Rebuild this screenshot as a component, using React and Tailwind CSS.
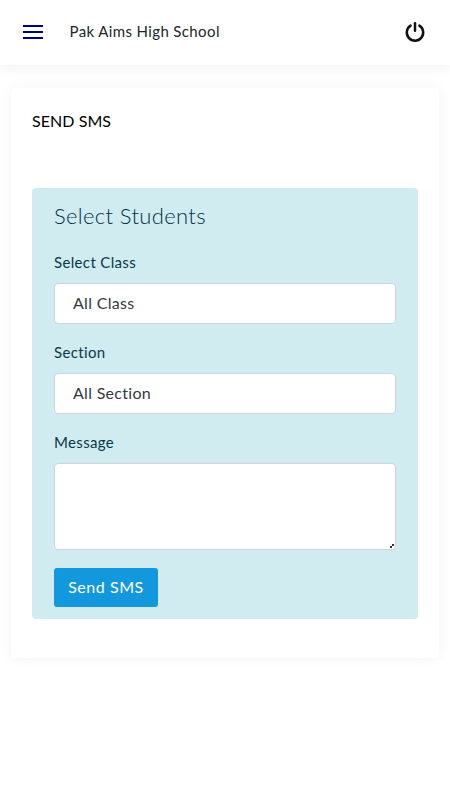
import React from "react";

const Field = ({ label, value, className }) => (
  <div className={className}>
    <label className="block text-[15px] leading-[22px] tracking-[0.35px] text-[#07384a]">{label}</label>
    <input
      readOnly
      value={value}
      className="mt-[10px] block h-[41px] w-full rounded-[4px] border border-[#ced4da] bg-white px-[18px] pb-[2px] text-[16px] tracking-[0.3px] text-[#33393f] outline-none"
    />
  </div>
);

export default function App() {
  return (
    <div className="min-h-[800px] bg-white font-['Lato','Noto_Sans',sans-serif]">
      <header className="flex h-[65px] items-center bg-white pb-[2px] pl-[23px] pr-[25px] shadow-[0_4px_12px_rgba(0,0,0,0.05)]">
        <div className="flex w-[20px] flex-col gap-[4px]">
          <span className="h-[2px] bg-[#000080]" />
          <span className="h-[2px] bg-[#000080]" />
          <span className="h-[2px] bg-[#000080]" />
        </div>
        <h1 className="ml-[26.5px] flex-1 text-[15px] tracking-[0.38px] text-[#212529]">Pak Aims High School</h1>
        <svg width="20" height="20" viewBox="0 0 20 20" fill="none" stroke="#111" strokeWidth="2.5" strokeLinecap="round">
          <path d="M5.6 3.6a8.2 8.2 0 1 0 8.8 0" />
          <path d="M10 1.2v7.6" />
        </svg>
      </header>
      <main className="px-[11px] pt-[23px]">
        <section className="h-[570px] rounded-[4px] bg-white px-[21px] pt-[22px] shadow-[0_0_14px_rgba(0,0,0,0.05)]">
          <h2 className="text-[16px] leading-[22px] tracking-[0.05px] text-black">SEND SMS</h2>
          <div className="mt-[56px] h-[431px] rounded-[4px] bg-[#d1ecf1] px-[22px] pt-[14px]">
            <h3 className="text-[22px] font-light leading-[28px] tracking-[0.35px] text-[#003245]">Select Students</h3>
            <Field label="Select Class" value="All Class" className="mt-[21px]" />
            <Field label="Section" value="All Section" className="mt-[17px]" />
            <div className="mt-[17px]">
              <label className="block text-[15px] leading-[22px] tracking-[0.35px] text-[#07384a]">Message</label>
              <div className="relative mt-[10px]">
                <textarea className="block h-[87px] w-full resize-none rounded-[4px] border border-[#ced4da] bg-white px-[18px] outline-none" />
                <svg className="absolute bottom-[2px] right-[2px]" width="4" height="4" viewBox="0 0 4 4" fill="#333">
                  <rect x="2" y="0" width="2" height="2" />
                  <rect x="0" y="2" width="2" height="2" />
                </svg>
              </div>
            </div>
            <button className="mt-[18px] flex h-[39px] w-[104px] items-center justify-center rounded-[3px] bg-[#1398de] pb-[2px] text-[16px] tracking-[0.55px] text-white">
              Send SMS
            </button>
          </div>
        </section>
      </main>
    </div>
  );
}
